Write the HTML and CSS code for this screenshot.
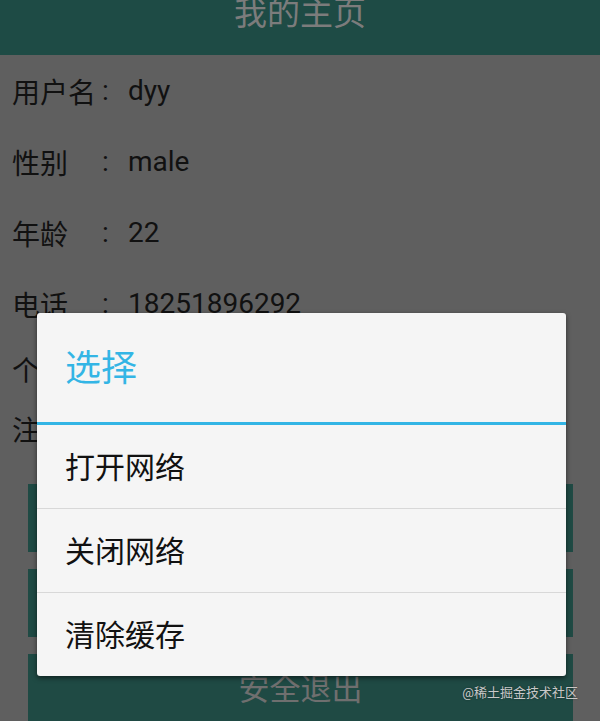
FILE: index.html
```html
<!DOCTYPE html>
<html lang="zh-CN">
<head>
    <meta charset="UTF-8">
    <meta name="viewport" content="width=device-width, initial-scale=1.0">
    <link rel="stylesheet" href="styles.css">
    <title>我的主页</title>
</head>
<body>
    <div class="screen">
        <!-- Title bar -->
        <div class="title-bar">我的主页</div>

        <!-- User info rows -->
        <div class="info">
            <div class="info-row">
                <span class="label">用户名</span><span class="colon">:</span><span class="value">dyy</span>
            </div>
            <div class="info-row">
                <span class="label">性别</span><span class="colon">:</span><span class="value">male</span>
            </div>
            <div class="info-row">
                <span class="label">年龄</span><span class="colon">:</span><span class="value">22</span>
            </div>
            <div class="info-row">
                <span class="label">电话</span><span class="colon">:</span><span class="value">18251896292</span>
            </div>
            <div class="info-row short">
                <span class="label">个性签名</span><span class="colon">:</span><span class="value">无</span>
            </div>
            <div class="info-row short">
                <span class="label">注册时间</span><span class="colon">:</span><span class="value">2016</span>
            </div>
        </div>

        <!-- Action buttons -->
        <div class="actions">
            <div class="action-btn">修改信息</div>
            <div class="action-btn">设置</div>
            <div class="action-btn">安全退出</div>
        </div>

        <!-- Dialog over the dimmed page -->
        <div class="dialog">
            <div class="dialog-title">选择</div>
            <div class="dialog-item">打开网络</div>
            <div class="dialog-item">关闭网络</div>
            <div class="dialog-item">清除缓存</div>
        </div>

        <div class="watermark">@稀土掘金技术社区</div>
    </div>
</body>
</html>
```

FILE: styles.css
```css
/* Whole screen, dimmed behind the dialog */
body, html {
    margin: 0;
    height: 100%;
    background-color: #5f5f5f;
    font-family: Roboto, "Noto Sans CJK SC", sans-serif;
}

.screen {
    position: relative;
    width: 600px;
    height: 721px;
    overflow: hidden;
}

.title-bar {
    height: 55px;
    background-color: #1e4b45;
    color: #7c7c7c;
    font-size: 33px;
    line-height: 28px;
    text-align: center;
}

/* Info rows */
.info {
    padding-left: 12px;
}

.info-row {
    display: flex;
    align-items: center;
    height: 71px;
    font-size: 28px;
    color: #111;
}

.info-row.short {
    height: 60px;
}

.label {
    width: 90px;
    white-space: nowrap;
}

/* long labels just run on, the dialog hides them */
.info-row.short .label {
    width: auto;
}

.colon {
    width: 26px;
}

/* Buttons */
.actions {
    display: flex;
    flex-direction: column;
    gap: 17px;
    margin: 25px 27px 0 28px;
}

.action-btn {
    height: 68px;
    line-height: 72px;
    background-color: #1f4a44;
    color: #6f6f6f;
    font-size: 31px;
    text-align: center;
}

/* Dialog */
.dialog {
    position: absolute;
    top: 313px;
    left: 37px;
    width: 529px;
    background-color: #f5f5f5;
    border-radius: 3px;
    box-shadow: 0 2px 5px rgba(0, 0, 0, 0.55);
}

.dialog-title {
    height: 109px;
    line-height: 112px;
    padding-left: 28px;
    font-size: 36px;
    color: #33b5e5;
    border-bottom: 3px solid #33b5e5;
}

.dialog-item {
    height: 83px;
    line-height: 86px;
    padding-left: 28px;
    font-size: 30px;
    color: #111;
}

.dialog-item + .dialog-item {
    border-top: 1px solid #d8d8d8;
}

.watermark {
    position: absolute;
    right: 22px;
    bottom: 20px;
    font-size: 13px;
    color: #c8c8c8;
    text-shadow: 0 0 2px rgba(0, 0, 0, 0.4);
}
```
